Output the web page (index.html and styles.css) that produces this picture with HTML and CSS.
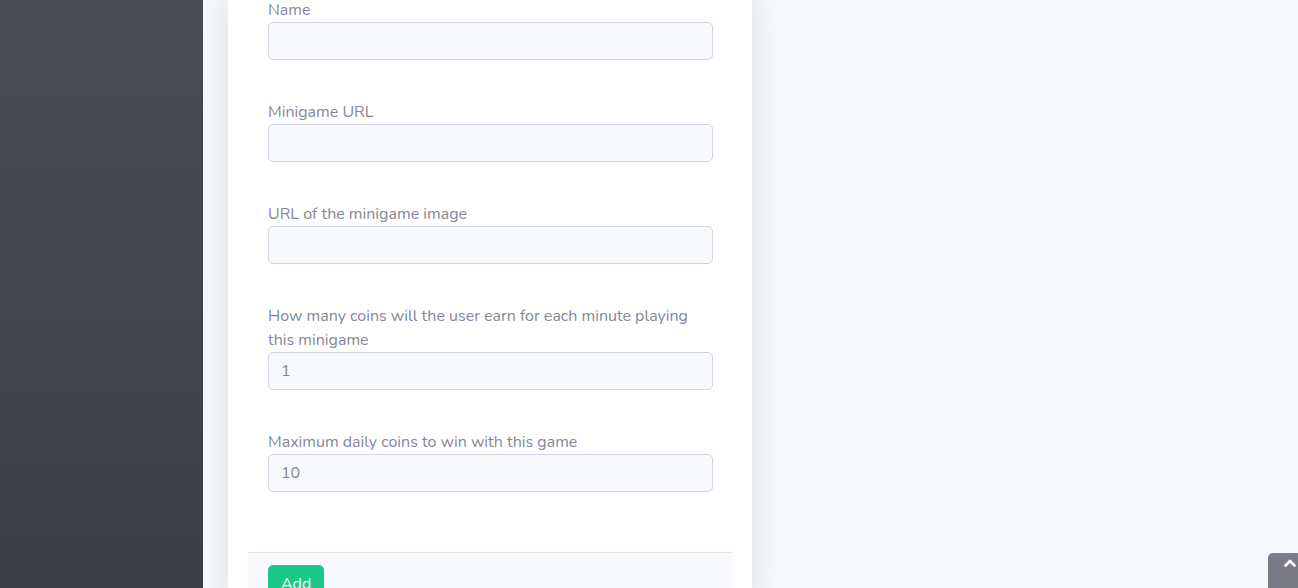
FILE: index.html
```html
<!DOCTYPE html>
<html lang="en">
<head>
<meta charset="utf-8">
<title>Add minigame</title>
<link rel="stylesheet" href="styles.css">
</head>
<body>
<div class="wrapper">
  <aside class="sidebar"></aside>
  <main class="content">
    <div class="card">
      <div class="card-body">
        <form class="form">
          <div class="form-group">
            <label class="label">Name</label>
            <input class="input" type="text" value="">
          </div>
          <div class="form-group">
            <label class="label">Minigame URL</label>
            <input class="input" type="text" value="">
          </div>
          <div class="form-group">
            <label class="label">URL of the minigame image</label>
            <input class="input" type="text" value="">
          </div>
          <div class="form-group">
            <label class="label">How many coins will the user earn for each minute playing this minigame</label>
            <input class="input" type="text" value="1">
          </div>
          <div class="form-group">
            <label class="label">Maximum daily coins to win with this game</label>
            <input class="input" type="text" value="10">
          </div>
        </form>
        <div class="card-footer">
          <button class="btn-success" type="button">Add</button>
        </div>
      </div>
    </div>
  </main>
</div>
<a class="scroll-top" href="#">
  <svg width="12" height="9" viewBox="0 0 12 9"><path d="M1.5 7.5 L6 3 L10.5 7.5" fill="none" stroke="#fff" stroke-width="2.6" stroke-linecap="round" stroke-linejoin="round"/></svg>
</a>
</body>
</html>
```
FILE: styles.css
```css
html, body {
  margin: 0;
  padding: 0;
  height: 100%;
  overflow: hidden;
}
body {
  background: #f7f8fc;
  font-family: "Nunito", "Lato", "Noto Sans", sans-serif;
  font-size: 16px;
  color: #858796;
}
.wrapper {
  display: flex;
  height: 588px;
}
.sidebar {
  width: 203px;
  flex: 0 0 203px;
  background: linear-gradient(180deg, #4b4c56 0%, #3d3d47 100%);
}
.content {
  flex: 1;
  padding-left: 25px;
}
.card {
  width: 524px;
  background: #fff;
  box-shadow: 0 0.15rem 1.75rem 0 rgba(58, 59, 69, 0.15);
  height: 600px;
}
.card-body {
  padding: 0 20px;
}
.form {
  padding: 0 20px 20px;
  margin-top: -2px;
}
.form-group {
  margin-bottom: 40px;
}
.label {
  display: block;
  line-height: 24px;
  color: #858796;
}
.input {
  display: block;
  box-sizing: border-box;
  width: 445px;
  height: 38px;
  padding: 6px 12px;
  font-family: inherit;
  font-size: 16px;
  color: #858796;
  background: #f8f9fc;
  border: 1px solid #d1d3e2;
  border-radius: 5px;
  margin: 0;
}
.card-footer {
  width: 485px;
  box-sizing: border-box;
  background: #f8f9fc;
  border-top: 1px solid #e3e6f0;
  padding: 12px 20px;
}
.btn-success {
  background: #1cc88a;
  color: #fff;
  border: 1px solid #1cc88a;
  border-radius: 5px;
  font-family: inherit;
  font-size: 16px;
  line-height: 24px;
  padding: 6px 12px;
}
.scroll-top {
  position: fixed;
  right: -14px;
  bottom: -9px;
  width: 44px;
  height: 44px;
  background: #7b7c88;
  border-top-left-radius: 5px;
  display: flex;
  justify-content: center;
  align-items: flex-start;
  padding-top: 5px;
  box-sizing: border-box;
}
```
